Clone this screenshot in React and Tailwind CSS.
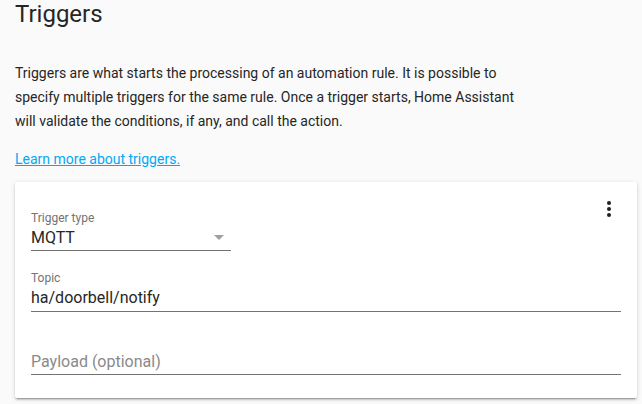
import React from 'react';

const MoreIcon = () => (
  <svg width="24" height="24" viewBox="0 0 24 24" className="text-[#212121]">
    <circle cx="12" cy="6" r="2" fill="currentColor" />
    <circle cx="12" cy="12" r="2" fill="currentColor" />
    <circle cx="12" cy="18" r="2" fill="currentColor" />
  </svg>
);

const App = () => {
  return (
    <div className="w-[642px] h-[404px] overflow-hidden bg-[#fafafa] pl-[15px] pr-[5px] font-['Roboto',sans-serif] text-[#262626]">
      <h1 className="text-[24px] leading-[28px] font-normal">Triggers</h1>
      <p className="mt-[33px] max-w-[520px] text-[14px] leading-[24px]">
        Triggers are what starts the processing of an automation rule. It is possible to specify multiple triggers for the same rule. Once a trigger starts, Home Assistant will validate the conditions, if any, and call the action.
      </p>
      <a href="#" className="mt-[14px] block w-fit text-[14px] leading-[24px] text-[#03a9f4] underline">
        Learn more about triggers.
      </a>
      <div className="mt-[11px] relative bg-white rounded-[2px] px-4 pt-[28px] pb-[23px] shadow-[0_2px_2px_0_rgba(0,0,0,0.14),0_1px_5px_0_rgba(0,0,0,0.12),0_3px_1px_-2px_rgba(0,0,0,0.2)]">
        <button className="absolute right-[16px] top-[15px] p-0">
          <MoreIcon />
        </button>
        <div className="w-[200px]">
          <div className="text-[12px] leading-[16px] text-[#737373]">Trigger type</div>
          <div className="flex items-center justify-between h-[25px] border-b border-[#737373] text-[16px] leading-[24px]">
            <span>MQTT</span>
            <svg width="10" height="5" viewBox="0 0 10 5" className="mr-[7px] mb-[1px] text-[#a0a0a0]">
              <path d="M0 0l5 5 5-5z" fill="currentColor" />
            </svg>
          </div>
        </div>
        <div className="mt-[19px]">
          <div className="text-[12px] leading-[16px] text-[#737373]">Topic</div>
          <div className="h-[26px] border-b border-[#737373] text-[16px] leading-[24px]">ha/doorbell/notify</div>
        </div>
        <div className="mt-[37px]">
          <div className="h-[26px] border-b border-[#737373] text-[16px] leading-[26px] text-[#8a8a8a]">Payload (optional)</div>
        </div>
      </div>
    </div>
  );
};

export default App;
